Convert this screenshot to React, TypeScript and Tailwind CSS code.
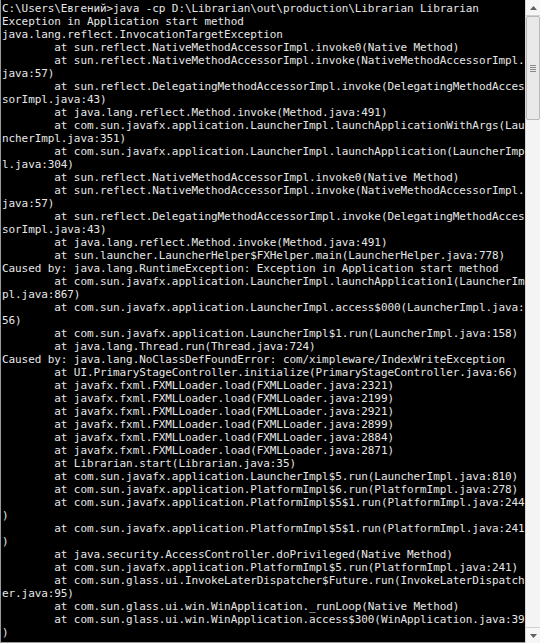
import React from "react";

const T = "        ";
const lines: string[] = [
  "C:\\Users\\Евгений>java -cp D:\\Librarian\\out\\production\\Librarian Librarian",
  "Exception in Application start method",
  "java.lang.reflect.InvocationTargetException",
  T + "at sun.reflect.NativeMethodAccessorImpl.invoke0(Native Method)",
  T + "at sun.reflect.NativeMethodAccessorImpl.invoke(NativeMethodAccessorImpl.",
  "java:57)",
  T + "at sun.reflect.DelegatingMethodAccessorImpl.invoke(DelegatingMethodAcces",
  "sorImpl.java:43)",
  T + "at java.lang.reflect.Method.invoke(Method.java:491)",
  T + "at com.sun.javafx.application.LauncherImpl.launchApplicationWithArgs(Lau",
  "ncherImpl.java:351)",
  T + "at com.sun.javafx.application.LauncherImpl.launchApplication(LauncherImp",
  "l.java:304)",
  T + "at sun.reflect.NativeMethodAccessorImpl.invoke0(Native Method)",
  T + "at sun.reflect.NativeMethodAccessorImpl.invoke(NativeMethodAccessorImpl.",
  "java:57)",
  T + "at sun.reflect.DelegatingMethodAccessorImpl.invoke(DelegatingMethodAcces",
  "sorImpl.java:43)",
  T + "at java.lang.reflect.Method.invoke(Method.java:491)",
  T + "at sun.launcher.LauncherHelper$FXHelper.main(LauncherHelper.java:778)",
  "Caused by: java.lang.RuntimeException: Exception in Application start method",
  T + "at com.sun.javafx.application.LauncherImpl.launchApplication1(LauncherIm",
  "pl.java:867)",
  T + "at com.sun.javafx.application.LauncherImpl.access$000(LauncherImpl.java:",
  "56)",
  T + "at com.sun.javafx.application.LauncherImpl$1.run(LauncherImpl.java:158)",
  T + "at java.lang.Thread.run(Thread.java:724)",
  "Caused by: java.lang.NoClassDefFoundError: com/ximpleware/IndexWriteException",
  T + "at UI.PrimaryStageController.initialize(PrimaryStageController.java:66)",
  T + "at javafx.fxml.FXMLLoader.load(FXMLLoader.java:2321)",
  T + "at javafx.fxml.FXMLLoader.load(FXMLLoader.java:2199)",
  T + "at javafx.fxml.FXMLLoader.load(FXMLLoader.java:2921)",
  T + "at javafx.fxml.FXMLLoader.load(FXMLLoader.java:2899)",
  T + "at javafx.fxml.FXMLLoader.load(FXMLLoader.java:2884)",
  T + "at javafx.fxml.FXMLLoader.load(FXMLLoader.java:2871)",
  T + "at Librarian.start(Librarian.java:35)",
  T + "at com.sun.javafx.application.LauncherImpl$5.run(LauncherImpl.java:810)",
  T + "at com.sun.javafx.application.PlatformImpl$6.run(PlatformImpl.java:278)",
  T + "at com.sun.javafx.application.PlatformImpl$5$1.run(PlatformImpl.java:244",
  ")",
  T + "at com.sun.javafx.application.PlatformImpl$5$1.run(PlatformImpl.java:241",
  ")",
  T + "at java.security.AccessController.doPrivileged(Native Method)",
  T + "at com.sun.javafx.application.PlatformImpl$5.run(PlatformImpl.java:241)",
  T + "at com.sun.glass.ui.InvokeLaterDispatcher$Future.run(InvokeLaterDispatch",
  "er.java:95)",
  T + "at com.sun.glass.ui.win.WinApplication._runLoop(Native Method)",
  T + "at com.sun.glass.ui.win.WinApplication.access$300(WinApplication.java:39",
  ")",
];

export default function App() {
  return (
    <div className="flex h-[643px] w-[540px] overflow-hidden bg-black">
      <div className="flex-1 overflow-hidden border-b border-l border-[#9a9a9a] pt-[2px] pl-[1px]">
        {lines.map((l, i) => (
          <div
            key={i}
            className="h-[13px] whitespace-pre text-[11px] leading-[13px] tracking-[-0.09px] text-[#e6e6e6]"
            style={{ fontFamily: '"DejaVu Sans Mono", "Liberation Mono", monospace' }}
          >
            {l}
          </div>
        ))}
      </div>
      <div className="flex w-[15px] flex-col border-l border-[#d8d8d8] bg-[#f2f2f2]">
        <div className="flex h-[16px] items-center justify-center border-b border-[#d0d0d0] bg-[#f6f6f6]">
          <svg width="7" height="4" viewBox="0 0 7 4">
            <path d="M0 4 L3.5 0 L7 4 Z" fill="#606060" />
          </svg>
        </div>
        <div className="flex h-[104px] flex-col items-center justify-center gap-[1px] rounded-[2px] border border-[#b8b8b8] bg-[#e9e9e9]">
          <div className="h-[1px] w-[6px] bg-[#8a8a8a]" />
          <div className="h-[1px] w-[6px] bg-[#8a8a8a]" />
          <div className="h-[1px] w-[6px] bg-[#8a8a8a]" />
          <div className="h-[1px] w-[6px] bg-[#8a8a8a]" />
        </div>
        <div className="flex-1 bg-[#f4f4f4]" />
        <div className="flex h-[16px] items-center justify-center border-t border-[#d0d0d0] bg-[#f6f6f6]">
          <svg width="7" height="4" viewBox="0 0 7 4">
            <path d="M0 0 L3.5 4 L7 0 Z" fill="#606060" />
          </svg>
        </div>
      </div>
    </div>
  );
}
